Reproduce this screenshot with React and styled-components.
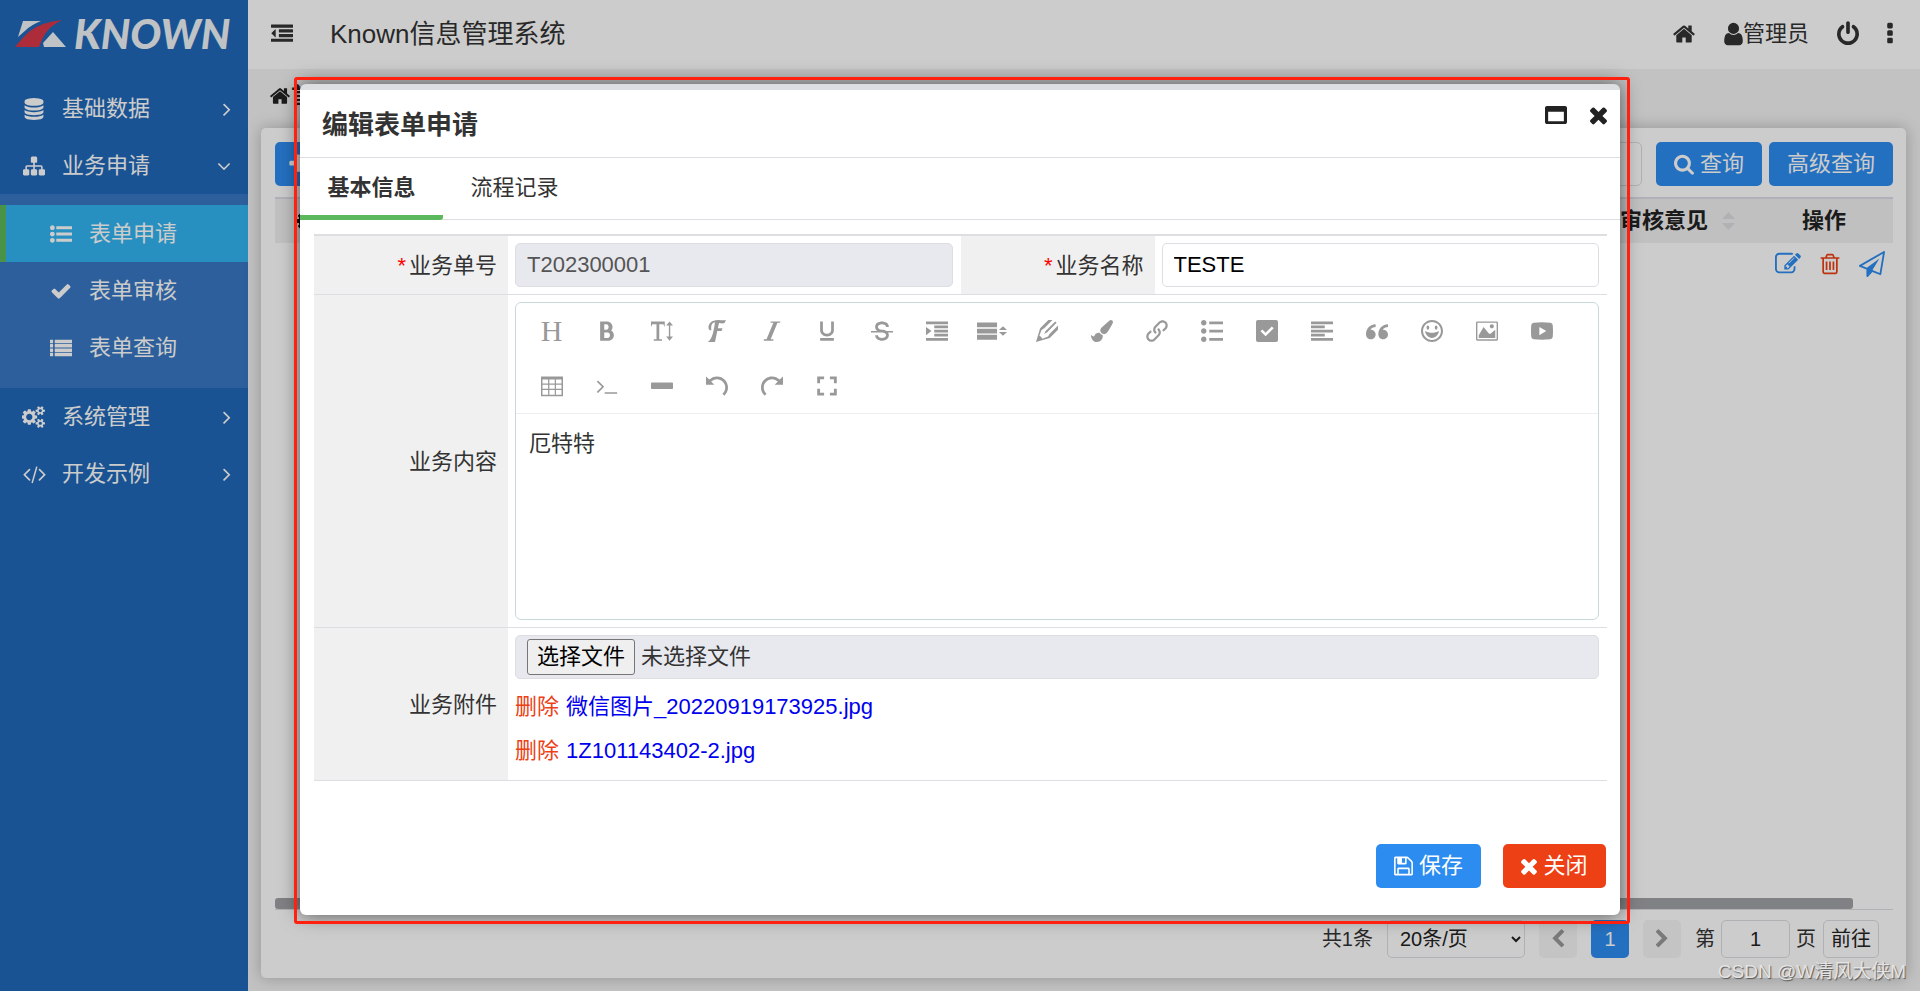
import React from "react";
import styled, { createGlobalStyle, css } from "styled-components";
import {
  ImBold, ImTextHeight, ImFont, ImItalic, ImUnderline, ImStrikethrough, ImIndentIncrease,
  ImPencil2, ImLink, ImList2, ImParagraphLeft, ImQuotesLeft, ImHappy, ImImage,
  ImUndo, ImRedo,
} from "react-icons/im";

const GlobalStyle = createGlobalStyle`
  * { box-sizing: border-box; }
  html, body, #root { height: 100%; }
  body {
    margin: 0;
    color: #333;
    background: #fff;
    font-family: "Liberation Sans", "Noto Sans CJK SC", sans-serif;
    font-size: 22px;
    line-height: 30px;
    overflow: hidden;
  }
  button, input, select, textarea { font: inherit; color: inherit; }
`;

/* ---------- icons ---------- */

const bar = (x, y, w, h = 192) =>
  `M${x + w} ${y + 32}v${h - 64}q0 13-9.5 22.5t-22.5 9.5h${-(w - 64)}q-13 0-22.5-9.5t-9.5-22.5v${-(h - 64)}q0-13 9.5-22.5t22.5-9.5h${w - 64}q13 0 22.5 9.5t9.5 22.5z`;
const dot = (y) => `M384 ${y}q0 80-56 136t-136 56-136-56-56-136 56-136 136-56 136 56 56 136z`;
const disc =
  "q237 0 443-43t325-127v170q0 69-103 128t-280 93.5-385 34.5-385-34.5-280-93.5-103-128v-170q119 84 325 127t443 43z";
const ellipsisDot = (y) =>
  `M1088 ${y}v192q0 40-28 68t-68 28h-192q-40 0-68-28t-28-68v-192q0-40 28-68t68-28h192q40 0 68 28t28 68z`;
const trashSlot = (x) => `M${x} 736v576q0 14-9 23t-23 9h-64q-14 0-23-9t-9-23v-576q0-14 9-23t23-9h64q14 0 23 9t9 23z`;
const smallCog = (y) =>
  `M1856 ${y}v140q0 16-149 31-12 27-30 52 51 113 51 138 0 4-4 7-122 71-124 71-8 0-46-47t-52-68q-20 2-30 2t-30-2q-14 21-52 68t-46 47q-2 0-124-71-4-3-4-7 0-25 51-138-18-25-30-52-149-15-149-31v-140q0-16 149-31 13-29 30-52-51-113-51-138 0-4 4-7 4-2 35-20t59-34 30-16q8 0 46 46.500t52 67.500q20-2 30-2t30 2q51-71 92-112l6-2q4 0 124 70 4 3 4 7 0 25-51 138 17 23 30 52 149 15 149 31z`;
const cogHole = (y) => `M1600 ${y}q0-52-38-90t-90-38-90 38-38 90q0 53 37.5 90.500t90.500 37.500 90.500-37.500 37.500-90.500z`;
const gear =
  "M832 896q0-106-75-181t-181-75-181 75-75 181 75 181 181 75 181-75 75-181z" +
  "M1216 805v185q0 10-7 19.5t-16 10.5l-155 24q-11 35-32 76 34 48 90 115 7 11 7 20 0 12-7 19-23 30-82.5 89.5t-78.5 59.5q-11 0-21-7l-115-90q-37 19-77 31-11 108-23 155-7 24-30 24h-186q-11 0-20-7.5t-10-17.5l-23-153q-34-10-75-31l-118 89q-7 7-20 7-11 0-21-8-144-133-144-160 0-9 7-19 10-14 41-53t47-61q-23-44-35-82l-152-24q-10-1-17-9.5t-7-19.5v-185q0-10 7-19.5t16-10.5l155-24q11-35 32-76-34-48-90-115-7-11-7-20 0-12 7-20 22-30 82-89t79-59q11 0 21 7l115 90q34-18 77-32 11-108 23-154 7-24 30-24h186q11 0 20 7.5t10 17.5l23 153q34 10 75 31l118-89q8-7 20-7 11 0 21 8 144 133 144 160 0 8-7 19-12 16-42 54t-45 60q23 48 34 82l152 23q10 2 17 10.5t7 19.5z";

const paths = {
  home: "M1472 992v480q0 26-19 45t-45 19h-384v-384h-256v384h-384q-26 0-45-19t-19-45v-480q0-1 .5-3t.5-3l575-474 575 474q1 2 1 6zm223-69l-62 74q-8 9-21 11h-3q-13 0-21-7l-692-577-692 577q-12 8-24 7-13-2-21-11l-62-74q-8-10-7-23.5t11-21.5l719-599q32-26 76-26t76 26l244 204v-195q0-14 9-23t23-9h192q14 0 23 9t9 23v408l219 182q10 8 11 21.5t-7 23.5z",
  user: "M1536 1399q0 109-62.5 187t-150.5 78h-854q-88 0-150.5-78t-62.5-187q0-85 8.5-160.5t31.5-152 58.5-131 94-89 134.5-34.5q131 128 313 128t313-128q76 0 134.5 34.5t94 89 58.5 131 31.5 152 8.5 160.5zm-256-887q0 159-112.500 271.500t-271.500 112.500-271.500-112.500-112.500-271.500 112.500-271.500 271.500-112.500 271.500 112.500 112.500 271.500z",
  power: "M1664 896q0 156-61 298t-164 245-245 164-298 61-298-61-245-164-164-245-61-298q0-182 80.5-343t226.5-270q43-32 95.5-25t83.5 50q32 42 24.5 94.5t-49.5 84.5q-98 74-151.5 181t-53.5 228q0 104 40.5 198.5t109.5 163.5 163.5 109.5 198.5 40.5 198.5-40.5 163.5-109.5 109.5-163.5 40.5-198.5q0-121-53.5-228t-151.5-181q-42-32-49.5-84.5t24.5-94.5q31-43 84-50t95 25q146 109 226.5 270t80.5 343zm-640-768v640q0 52-38 90t-90 38-90-38-38-90v-640q0-52 38-90t90-38 90 38 38 90z",
  more: ellipsisDot(1248) + ellipsisDot(736) + ellipsisDot(224),
  outdent:
    "M384 544v576q0 13-9.500 22.500t-22.500 9.500q-14 0-23-9l-288-288q-9-9-9-23t9-23l288-288q9-9 23-9 13 0 22.500 9.500t9.500 22.500z" +
    bar(0, 1280, 1792, 256) + bar(640, 896, 1152, 256) + bar(640, 512, 1152, 256) + bar(0, 128, 1792, 256),
  database:
    "M896 768" + disc + "M896 1536" + disc + "M896 1152" + disc +
    "M896 0q208 0 385 34.5t280 93.5 103 128v128q0 69-103 128t-280 93.5-385 34.5-385-34.5-280-93.5-103-128v-128q0-69 103-128t280-93.5 385-34.5z",
  sitemap: "M1792 1248v320q0 40-28 68t-68 28h-320q-40 0-68-28t-28-68v-320q0-40 28-68t68-28h96v-192h-512v192h96q40 0 68 28t28 68v320q0 40-28 68t-68 28h-320q-40 0-68-28t-28-68v-320q0-40 28-68t68-28h96v-192h-512v192h96q40 0 68 28t28 68v320q0 40-28 68t-68 28h-320q-40 0-68-28t-28-68v-320q0-40 28-68t68-28h96v-192q0-52 38-90t90-38h512v-192h-96q-40 0-68-28t-28-68v-320q0-40 28-68t68-28h320q40 0 68 28t28 68v320q0 40-28 68t-68 28h-96v192h512q52 0 90 38t38 90v192h96q40 0 68 28t28 68z",
  listUl: dot(1408) + dot(896) + dot(384) + bar(512, 1280, 1280, 256) + bar(512, 768, 1280, 256) + bar(512, 256, 1280, 256),
  list: [1280, 928, 576, 224].map((y) => bar(0, y, 256, 288) + bar(384, y, 1408, 288)).join(""),
  check: "M1671 566q0 40-28 68l-724 724-136 136q-28 28-68 28t-68-28l-136-136-362-362q-28-28-28-68t28-68l136-136q28-28 68-28t68 28l294 295 656-657q28-28 68-28t68 28l136 136q28 28 28 68z",
  cog: gear,
  cogs: gear + cogHole(1408) + cogHole(384) + smallCog(1338) + smallCog(314),
  code: "M681 1399l-50 50q-10 10-23 10t-23-10l-466-466q-10-10-10-23t10-23l466-466q10-10 23-10t23 10l50 50q10 10 10 23t-10 23l-393 393 393 393q10 10 10 23t-10 23zm591-1067l-373 1291q-4 13-15.500 19.500t-23.500 2.500l-62-17q-13-4-19.500-15.500t-2.500-24.500l373-1291q4-13 15.500-19.500t23.500-2.500l62 17q13 4 19.500 15.500t2.500 24.500zm657 651l-466 466q-10 10-23 10t-23-10l-50-50q-10-10-10-23t10-23l393-393-393-393q-10-10-10-23t10-23l50-50q10-10 23-10t23 10l466 466q10 10 10 23t-10 23z",
  right: "M1171 960q0 13-10 23l-466 466q-10 10-23 10t-23-10l-50-50q-10-10-10-23t10-23l393-393-393-393q-10-10-10-23t10-23l50-50q10-10 23-10t23 10l466 466q10 10 10 23z",
  down: "M1395 736q0 13-10 23l-466 466q-10 10-23 10t-23-10l-466-466q-10-10-10-23t10-23l50-50q10-10 23-10t23 10l393 393 393-393q10-10 23-10t23 10l50 50q10 10 10 23z",
  search: "M1216 832q0-185-131.5-316.5t-316.5-131.5-316.5 131.5-131.5 316.5 131.5 316.5 316.5 131.5 316.5-131.5 131.5-316.5zm512 832q0 52-38 90t-90 38q-54 0-90-38l-343-342q-179 124-399 124-143 0-273.5-55.5t-225-150-150-225-55.5-273.5 55.5-273.5 150-225 225-150 273.5-55.5 273.5 55.5 225 150 150 225 55.5 273.5q0 220-124 399l343 343q37 37 37 90z",
  plus: "M1600 736v192q0 40-28 68t-68 28h-416v416q0 40-28 68t-68 28h-192q-40 0-68-28t-28-68v-416h-416q-40 0-68-28t-28-68v-192q0-40 28-68t68-28h416v-416q0-40 28-68t68-28h192q40 0 68 28t28 68v416h416q40 0 68 28t28 68z",
  close: "M1490 1322q0 40-28 68l-136 136q-28 28-68 28t-68-28l-294-294-294 294q-28 28-68 28t-68-28l-136-136q-28-28-28-68t28-68l294-294-294-294q-28-28-28-68t28-68l136-136q28-28 68-28t68 28l294 294 294-294q28-28 68-28t68 28l136 136q28 28 28 68t-28 68l-294 294 294 294q28 28 28 68z",
  maximize: "M256 1408h1280v-768h-1280zM1792 320v1152q0 66-47 113t-113 47h-1472q-66 0-113-47t-47-113v-1152q0-66 47-113t113-47h1472q66 0 113 47t47 113z",
  trash:
    trashSlot(704) + trashSlot(960) + trashSlot(1216) +
    "M1344 1460v-948h-896v948q0 22 7 40.5t14.5 27 10.5 8.5h832q3 0 10.5-8.5t14.5-27 7-40.5zm-672-1076h448l-48-117q-7-9-17-11h-317q-10 2-17 11zm928 32v64q0 14-9 23t-23 9h-96v948q0 83-47 143.5t-113 60.5h-832q-66 0-113-58.5t-47-141.5v-952h-96q-14 0-23-9t-9-23v-64q0-14 9-23t23-9h309l70-167q15-37 54-63t79-26h320q40 0 79 26t54 63l70 167h309q14 0 23 9t9 23z",
  edit: "M888 1184l116-116-152-152-116 116v56h96v96h56zm440-720q-16-16-33 1l-350 350q-17 17-1 33t33-1l350-350q17-17 1-33zm80 594v190q0 119-84.5 203.5t-203.5 84.5h-832q-119 0-203.5-84.5t-84.5-203.5v-832q0-119 84.5-203.5t203.5-84.5h832q63 0 117 25 15 7 18 23 3 17-9 29l-49 49q-14 14-32 8-23-6-45-6h-832q-66 0-113 47t-47 113v832q0 66 47 113t113 47h832q66 0 113-47t47-113v-126q0-13 9-22l64-64q15-15 35-7t20 29zm-96-738l288 288-672 672h-288v-288zm444 132l-92 92-288-288 92-92q28-28 68-28t68 28l152 152q28 28 28 68t-28 68z",
  plane: "M1764 11q33 24 27 64l-256 1536q-5 29-32 45-14 8-31 8-11 0-24-5l-527-215-298 327q-18 21-47 21-14 0-23-4-19-7-30-23.5t-11-36.5v-452l-472-193q-37-14-40-55-3-39 32-59l1664-960q35-21 68 2zm-342 1499l221-1323-1434 827 336 137 863-639-478 797z",
  save: "M512 1536h768v-384h-768v384zm896 0h128v-896q0-14-10-38.5t-20-34.5l-281-281q-10-10-34-20t-39-10v416q0 40-28 68t-68 28h-576q-40 0-68-28t-28-68v-416h-128v1280h128v-416q0-40 28-68t68-28h832q40 0 68 28t28 68v416zm-384-928v-320q0-13-9.5-22.5t-22.5-9.5h-192q-13 0-22.5 9.5t-9.5 22.5v320q0 13 9.5 22.5t22.5 9.5h192q13 0 22.5-9.5t9.5-22.5zm640 32v928q0 40-28 68t-68 28h-1344q-40 0-68-28t-28-68v-1344q0-40 28-68t68-28h928q40 0 88 20t76 48l280 280q28 28 48 76t20 88z",
  prev: "M1427 301l-531 531 531 531q19 19 19 45t-19 45l-166 166q-19 19-45 19t-45-19l-742-742q-19-19-19-45t19-45l742-742q19-19 45-19t45 19l166 166q19 19 19 45t-19 45z",
  next: "M1363 877l-742 742q-19 19-45 19t-45-19l-166-166q-19-19-19-45t19-45l531-531-531-531q-19-19-19-45t19-45l166-166q19-19 45-19t45 19l742 742q19 19 19 45t-19 45z",
  brush: "M1615 0q70 0 122.5 46.5t52.5 116.5q0 63-45 151-332 629-465 752-97 91-218 91-126 0-216.5-92.5t-90.5-219.5q0-128 92-212l638-579q59-54 130-54zm-909 1034q39 76 106.5 130t150.5 76l1 71q4 213-129.5 347t-348.500 134q-123 0-218-46.500t-152.500-127.500-86.500-183-29-220q7 5 41 30t62 44.500 59 36.500 46 17q41 0 55-37 25-66 57.500-112.500t69.500-76 88-47.500 103-25.500 125-10.500z",
  terminal: "M649 983l-466 466q-10 10-23 10t-23-10l-50-50q-10-10-10-23t10-23l393-393-393-393q-10-10-10-23t10-23l50-50q10-10 23-10t23 10l466 466q10 10 10 23t-10 23zm1079 457v64q0 14-9 23t-23 9h-960q-14 0-23-9t-9-23v-64q0-14 9-23t23-9h960q14 0 23 9t9 23z",
  lineHeight: "M0 200h1630v390h-1630zM0 705h1630v390h-1630zM0 1210h1630v390h-1630zM1790 815l325-300 325 300zM1790 975l325 300 325-300z",
  todo: "M160 0h1472q160 0 160 160v1472q0 160-160 160h-1472q-160 0-160-160v-1472q0-160 160-160zM780 1330l660-660-150-150-510 510-260-260-150 150z",
  table: "M0 128h1792v1600h-1792zM120 370v330h460v-330zM680 370v330h440v-330zM1220 370v330h450v-330zM120 800v330h460v-330zM680 800v330h440v-330zM1220 800v330h450v-330zM120 1230v380h460v-380zM680 1230v380h440v-380zM1220 1230v380h450v-380z",
  video: "M220 230Q896 150 1572 230Q1752 250 1772 430Q1810 896 1772 1362Q1752 1542 1572 1562Q896 1642 220 1562Q40 1542 20 1362Q-18 896 20 430Q40 250 220 230zM680 560v672l560-336z",
  minus: "M64 610h1664q64 0 64 64v400q0 64-64 64h-1664q-64 0-64-64v-400q0-64 64-64z",
  full: "M100 120h560v230h-330v330h-230zM1132 120h560v560h-230v-330h-330zM100 1112h230v330h330v230h-560zM1462 1112h230v560h-560v-230h330z",
};

/* horizontal start and width of the glyphs that are not square */
const spans = {
  user: [256, 1280],
  power: [128, 1536],
  more: [704, 384],
  cogs: [0, 1920],
  code: [0, 2048],
  cog: [-160, 1536],
  right: [512, 704],
  down: [320, 1152],
  search: [64, 1664],
  save: [128, 1536],
  close: [302, 1188],
  lineHeight: [0, 2440],
};

const Glyph = styled.svg`
  display: block;
  flex: none;
  fill: currentColor;
  fill-rule: ${(p) => (p.$evenOdd ? "evenodd" : "nonzero")};
`;

function Icon({ name, size = 22 }) {
  const [start, span] = spans[name] || [0, 1792];
  return (
    <Glyph
      width={Math.round((size * span) / 1792)}
      height={size}
      viewBox={`${start} 0 ${span} 1792`}
      $evenOdd={["todo", "maximize", "table", "video"].includes(name)}
      aria-hidden="true"
    >
      <path d={paths[name]} />
    </Glyph>
  );
}

/* ---------- page frame ---------- */

const Page = styled.div`
  position: relative;
  display: flex;
  height: 100%;
`;

const Sidebar = styled.aside`
  width: 248px;
  flex: none;
  background: #2068b8;
  color: #fff;
`;

const Brand = styled.div`
  display: flex;
  align-items: center;
  height: 69px;
  padding: 0 0 2px 14px;
  margin-bottom: 11px;
  gap: 7px;
`;

const BrandName = styled.span`
  font-family: Lato, "Liberation Sans", sans-serif;
  font-size: 41px;
  font-weight: 900;
  font-style: italic;
  line-height: 42px;
  color: #f0f4f8;
`;

const menuRow = css`
  display: flex;
  align-items: center;
  height: 57px;
  color: inherit;
  text-decoration: none;
`;

const MenuLink = styled.a`
  ${menuRow}
  padding: 0 17px 0 22px;
`;

const MenuIcon = styled.span`
  display: flex;
  justify-content: center;
  width: 24px;
`;

const MenuText = styled.span`
  flex: 1;
  padding-left: 16px;
`;

const SubMenu = styled.div`
  padding: 11px 0 12px;
  background: #3777c2;
`;

const SubLink = styled.a`
  ${menuRow}
  padding-left: 43px;
  border-left: 6px solid ${(p) => (p.$active ? "#5cb85c" : "transparent")};
  background: ${(p) => (p.$active ? "#32b4f0" : "none")};
`;

const Main = styled.main`
  flex: 1;
  min-width: 0;
  display: flex;
  flex-direction: column;
  background: #f3f3f3;
`;

const TopBar = styled.header`
  display: flex;
  align-items: center;
  height: 69px;
  padding: 0 27px 1px 23px;
  background: #fff;
`;

const AppTitle = styled.h1`
  flex: 1;
  margin: 0 0 0 37px;
  font-size: 26px;
  font-weight: 400;
`;

const TopActions = styled.div`
  display: flex;
  align-items: center;
  gap: 28px;
`;

const PlainButton = styled.button`
  display: flex;
  align-items: center;
  padding: 0;
  border: 0;
  background: none;
  color: ${(p) => p.$color || "inherit"};
`;

const Crumbs = styled.nav`
  display: flex;
  align-items: center;
  height: 59px;
  padding: 0 21px 5px;
  color: #222;
  font-weight: 700;
`;

const Panel = styled.section`
  flex: 1;
  display: flex;
  flex-direction: column;
  margin: 0 14px 13px 13px;
  padding: 14px 13px 0 14px;
  border-radius: 5px;
  background: #fff;
  box-shadow: 0 0 16px rgba(0, 0, 0, 0.25);
`;

const Query = styled.div`
  display: flex;
  align-items: center;
  height: 44px;
  gap: 7px;
  margin-bottom: 11px;
`;

const Spacer = styled.div`
  flex: 1;
`;

const Button = styled.button`
  display: flex;
  align-items: center;
  justify-content: center;
  gap: 6px;
  height: 44px;
  padding: 0 18px;
  border: 0;
  border-radius: 5px;
  background: ${(p) => (p.$danger ? "#ed4014" : "#2d8cf0")};
  color: #fff;
`;

const AddButton = styled(Button)`
  padding: 0 12px;
`;

const QueryInput = styled.input`
  width: 240px;
  height: 44px;
  margin-right: 7px;
  border: 1px solid #dcdee2;
  border-radius: 5px;
  background: #fff;
`;

const Grid = styled.table`
  width: 100%;
  border-collapse: collapse;
  border-top: 2px solid #dcdee6;
  color: #222;

  th {
    height: 45px;
    padding: 0;
    background: #f0f0f0;
  }
  td {
    height: 42px;
    padding: 0;
    text-align: center;
  }
`;

const HeadCell = styled.div`
  display: flex;
  align-items: center;
  justify-content: ${(p) => (p.$end ? "flex-end" : "center")};
  gap: 14px;
  padding-right: ${(p) => (p.$end ? "20px" : "0")};
`;

const SortMark = styled.svg`
  display: block;
  fill: #dcdee2;
`;

const RowActions = styled.div`
  display: flex;
  align-items: center;
  justify-content: flex-end;
  gap: 17px;
  padding-right: 8px;
`;

const GridSpace = styled.div`
  flex: 1;
`;

const ScrollTrack = styled.div`
  height: 12px;
  padding-right: 40px;
  border-bottom: 1px solid #dcdee2;

  div {
    height: 11px;
    border-radius: 3px;
    background: #a0a2a5;
  }
`;

const Pager = styled.div`
  display: flex;
  align-items: center;
  justify-content: flex-end;
  height: 68px;
  padding: 0 14px 10px 0;
  font-size: 20px;

  select {
    width: 138px;
    height: 38px;
    margin: 0 14px;
    padding: 0 8px;
    border: 1px solid #dcdee2;
    border-radius: 5px;
    background: #fff;
    color: #222;
  }
  input {
    width: 69px;
    height: 38px;
    margin: 0 6px;
    border: 1px solid #dcdee2;
    border-radius: 5px;
    background: #fff;
    text-align: center;
    color: #222;
  }
`;

const PageButton = styled.button`
  display: flex;
  align-items: center;
  justify-content: center;
  width: 38px;
  height: 38px;
  margin-right: 14px;
  padding: 0;
  border: 0;
  border-radius: 5px;
  background: ${(p) => (p.$current ? "#2d8cf0" : "#f5f5f5")};
  color: ${(p) => (p.$current ? "#fff" : "#999")};
`;

const GoButton = styled.button`
  width: 56px;
  height: 38px;
  margin-left: 7px;
  padding: 0;
  border: 1px solid #dcdee2;
  border-radius: 5px;
  background: #fff;
  color: #222;
`;

/* ---------- dialog ---------- */

const Mask = styled.div`
  position: absolute;
  inset: 0;
  display: flex;
  align-items: center;
  justify-content: center;
  padding-top: 8px;
  background: rgba(0, 0, 0, 0.2);
`;

const Dialog = styled.section`
  position: relative;
  width: 1320px;
  max-width: 90%;
  border-top: 6px solid #dcdee2;
  border-radius: 6px;
  background: #fff;
  box-shadow: 0 0 20px rgba(0, 0, 0, 0.6);
`;

const Highlight = styled.div`
  position: absolute;
  inset: -13px -10px -9px -6px;
  border: 3px solid #ff2010;
  border-radius: 3px;
  pointer-events: none;
`;

const DialogHead = styled.header`
  display: flex;
  justify-content: space-between;
  height: 68px;
  padding: 0 13px 0 22px;
  border-bottom: 1px solid #dcdee2;

  h2 {
    margin: 0;
    font-size: 26px;
    line-height: 70px;
  }
`;

const DialogTools = styled.div`
  display: flex;
  align-items: center;
  gap: 23px;
  height: 50px;
  color: #222;
`;

const Tabs = styled.div`
  display: flex;
  height: 62px;
  border-bottom: 1px solid #dcdee2;
`;

const Tab = styled.button`
  width: 143px;
  margin-bottom: -1px;
  padding: 2px 0 0;
  border: 0;
  border-bottom: 5px solid ${(p) => (p.$active ? "#5cb85c" : "transparent")};
  border-radius: 0 0 3px 0;
  background: none;
  font-weight: ${(p) => (p.$active ? 700 : 400)};
`;

const FormTable = styled.table`
  width: calc(100% - 27px);
  margin: 14px 13px 0 14px;
  border-spacing: 0;
  table-layout: fixed;
  border-top: 2px solid #dcdee2;

  th {
    width: 194px;
    padding: 1px 11px 0;
    border-bottom: 1px solid #dcdee2;
    background: #f0f0f0;
    font-weight: 400;
    text-align: right;
  }
  td {
    padding: 7px 8px 7px 7px;
    border-bottom: 1px solid #dcdee2;
  }
`;

const Required = styled.span`
  margin-right: 3px;
  color: #f00;
`;

const TextBox = styled.input`
  display: block;
  width: 100%;
  height: 44px;
  padding: 0 11px;
  border: 1px solid #dcdee2;
  border-radius: 5px;
  background: ${(p) => (p.readOnly ? "#e8e9ee" : "#fff")};
  color: ${(p) => (p.readOnly ? "#555" : "#000")};
`;

const Editor = styled.div`
  border: 1px solid #c9d8db;
  border-radius: 6px;
`;

const EditorBar = styled.div`
  display: flex;
  flex-wrap: wrap;
  padding: 0 8px;
  border-bottom: 1px solid #eee;
`;

const Tool = styled.button`
  display: flex;
  align-items: center;
  justify-content: center;
  width: 55px;
  height: 55px;
  padding: 0;
  border: 0;
  background: none;
  color: #999;
`;

const HeadingMark = styled.span`
  font-family: "Liberation Serif", serif;
  font-size: 30px;
`;

const EditorText = styled.textarea`
  display: block;
  width: 100%;
  height: 205px;
  padding: 14px 13px;
  border: 0;
  outline: 0;
  background: none;
  line-height: 32px;
  resize: none;
`;

const FileBox = styled.div`
  position: relative;
  display: flex;
  align-items: center;
  gap: 6px;
  height: 44px;
  margin-bottom: 6px;
  padding: 0 11px;
  border: 1px solid #dcdee2;
  border-radius: 5px;
  background: #e8e9ee;
  line-height: 34px;

  input {
    position: absolute;
    width: 1px;
    height: 1px;
    opacity: 0;
  }
  label {
    padding: 0 9px;
    border: 1px solid #767676;
    border-radius: 3px;
    background: #efefef;
    color: #000;
  }
`;

const FileRow = styled.div`
  display: flex;
  gap: 7px;
  height: 44px;
  line-height: 44px;

  a {
    color: #0000ee;
    text-decoration: none;
  }
`;

const DialogFoot = styled.footer`
  display: flex;
  justify-content: flex-end;
  gap: 22px;
  padding: 63px 14px 27px;
`;

const DialogButton = styled(Button)`
  min-width: 103px;
`;

const Watermark = styled.div`
  position: absolute;
  right: 14px;
  bottom: 5px;
  color: #e4e4e4;
  font-size: 19px;
  line-height: 28px;
  text-shadow: 1px 1px 1px #555;
`;

const menuBefore = [{ icon: "database", text: "基础数据", arrow: "right" }, { icon: "sitemap", text: "业务申请", arrow: "down" }];
const subMenu = [{ icon: "listUl", text: "表单申请", active: true }, { icon: "check", text: "表单审核" }, { icon: "list", text: "表单查询" }];
const menuAfter = [{ icon: "cogs", text: "系统管理", arrow: "right" }, { icon: "code", text: "开发示例", arrow: "right" }];

const HeadingTool = () => <HeadingMark>H</HeadingMark>;

const tools = [
  ["标题", HeadingTool], ["加粗", ImBold], ["字号", ImTextHeight], ["字体", ImFont], ["斜体", ImItalic],
  ["下划线", ImUnderline], ["删除线", ImStrikethrough], ["缩进", ImIndentIncrease], ["行高", "lineHeight"],
  ["文字颜色", ImPencil2], ["背景颜色", "brush"], ["链接", ImLink], ["列表", ImList2], ["待办", "todo"],
  ["对齐", ImParagraphLeft], ["引用", ImQuotesLeft], ["表情", ImHappy], ["图片", ImImage], ["视频", "video"],
  ["表格", "table"], ["代码", "terminal"], ["分割线", "minus"], ["撤销", ImUndo], ["恢复", ImRedo], ["全屏", "full"],
];

function MenuItem({ item }) {
  return (
    <MenuLink href="#">
      <MenuIcon><Icon name={item.icon} /></MenuIcon>
      <MenuText>{item.text}</MenuText>
      <Icon name={item.arrow} />
    </MenuLink>
  );
}

function Logo() {
  return (
    <svg width="53" height="28" viewBox="0 0 53 28" aria-hidden="true">
      <path d="M9 1h18Q17 5 12 10L4 17z" fill="#f0f4f8" />
      <path d="M1 27Q9 17 16 11 28 2 48 0 36 6 31 14 28 19 25 27z" fill="#d83848" />
      <path d="M39 12l13 15H30l-1-4z" fill="#f0f4f8" />
    </svg>
  );
}

export default function App() {
  return (
    <>
      <GlobalStyle />
      <Page>
        <Sidebar>
          <Brand><Logo /><BrandName>KNOWN</BrandName></Brand>
          <nav>
            {menuBefore.map((item) => <MenuItem key={item.text} item={item} />)}
            <SubMenu>
              {subMenu.map((item) => (
                <SubLink key={item.text} href="#" $active={item.active}>
                  <MenuIcon><Icon name={item.icon} /></MenuIcon>
                  <MenuText>{item.text}</MenuText>
                </SubLink>
              ))}
            </SubMenu>
            {menuAfter.map((item) => <MenuItem key={item.text} item={item} />)}
          </nav>
        </Sidebar>

        <Main>
          <TopBar>
            <PlainButton aria-label="折叠菜单"><Icon name="outdent" /></PlainButton>
            <AppTitle>Known信息管理系统</AppTitle>
            <TopActions>
              <PlainButton aria-label="首页"><Icon name="home" size={24} /></PlainButton>
              <PlainButton><Icon name="user" size={26} />管理员</PlainButton>
              <PlainButton aria-label="退出"><Icon name="power" size={26} /></PlainButton>
              <PlainButton aria-label="更多"><Icon name="more" size={26} /></PlainButton>
            </TopActions>
          </TopBar>
          <Crumbs><Icon name="home" />首页</Crumbs>
          <Panel>
            <Query>
              <AddButton><Icon name="plus" />新增</AddButton>
              <Spacer />
              <QueryInput aria-label="业务名称" />
              <Button><Icon name="search" />查询</Button>
              <Button>高级查询</Button>
            </Query>
            <Grid>
              <colgroup><col width="61" /><col /><col width="138" /></colgroup>
              <thead>
                <tr>
                  <th>
                    <HeadCell>
                      <PlainButton aria-label="列设置" $color="#000"><Icon name="cog" size={26} /></PlainButton>
                    </HeadCell>
                  </th>
                  <th>
                    <HeadCell $end>
                      审核意见
                      <SortMark width="13" height="18" viewBox="0 0 13 18"><path d="M6.500 0L13 7H0zM6.500 18L0 11h13z" /></SortMark>
                    </HeadCell>
                  </th>
                  <th>操作</th>
                </tr>
              </thead>
              <tbody>
                <tr>
                  <td>1</td>
                  <td />
                  <td>
                    <RowActions>
                      <PlainButton aria-label="编辑" $color="#2d8cf0"><Icon name="edit" size={26} /></PlainButton>
                      <PlainButton aria-label="删除" $color="#ed4014"><Icon name="trash" size={24} /></PlainButton>
                      <PlainButton aria-label="提交" $color="#2d8cf0"><Icon name="plane" size={26} /></PlainButton>
                    </RowActions>
                  </td>
                </tr>
              </tbody>
            </Grid>
            <GridSpace />
            <ScrollTrack><div /></ScrollTrack>
            <Pager>
              共1条
              <select aria-label="每页条数"><option>20条/页</option></select>
              <PageButton aria-label="上一页"><Icon name="prev" size={20} /></PageButton>
              <PageButton $current>1</PageButton>
              <PageButton aria-label="下一页"><Icon name="next" size={20} /></PageButton>
              <label htmlFor="page">第</label>
              <input id="page" defaultValue="1" />
              页
              <GoButton>前往</GoButton>
            </Pager>
          </Panel>
        </Main>

        <Mask>
          <Dialog role="dialog" aria-labelledby="dialog-title">
            <DialogHead>
              <h2 id="dialog-title">编辑表单申请</h2>
              <DialogTools>
                <PlainButton aria-label="最大化"><Icon name="maximize" /></PlainButton>
                <PlainButton aria-label="关闭"><Icon name="close" size={26} /></PlainButton>
              </DialogTools>
            </DialogHead>
            <Tabs role="tablist">
              <Tab role="tab" aria-selected="true" $active>基本信息</Tab>
              <Tab role="tab" aria-selected="false">流程记录</Tab>
            </Tabs>
            <FormTable>
              <tbody>
                <tr>
                  <th scope="row"><Required>*</Required><label htmlFor="no">业务单号</label></th>
                  <td><TextBox id="no" defaultValue="T202300001" readOnly /></td>
                  <th scope="row"><Required>*</Required><label htmlFor="name">业务名称</label></th>
                  <td><TextBox id="name" defaultValue="TESTE" /></td>
                </tr>
                <tr>
                  <th scope="row"><label htmlFor="content">业务内容</label></th>
                  <td colSpan={3}>
                    <Editor>
                      <EditorBar role="toolbar">
                        {tools.map(([label, Mark]) => (
                          <Tool key={label} aria-label={label}>
                            {typeof Mark === "string" ? <Icon name={Mark} /> : <Mark size={22} />}
                          </Tool>
                        ))}
                      </EditorBar>
                      <EditorText id="content" defaultValue="厄特特" />
                    </Editor>
                  </td>
                </tr>
                <tr>
                  <th scope="row">业务附件</th>
                  <td colSpan={3}>
                    <FileBox>
                      <input id="file" type="file" />
                      <label htmlFor="file">选择文件</label>
                      未选择文件
                    </FileBox>
                    <FileRow>
                      <PlainButton $color="#ed4014">删除</PlainButton>
                      <a href="#">微信图片_20220919173925.jpg</a>
                    </FileRow>
                    <FileRow>
                      <PlainButton $color="#ed4014">删除</PlainButton>
                      <a href="#">1Z101143402-2.jpg</a>
                    </FileRow>
                  </td>
                </tr>
              </tbody>
            </FormTable>
            <DialogFoot>
              <DialogButton><Icon name="save" />保存</DialogButton>
              <DialogButton $danger><Icon name="close" size={24} />关闭</DialogButton>
            </DialogFoot>
            <Highlight />
          </Dialog>
        </Mask>
        <Watermark>CSDN @W清风大侠M</Watermark>
      </Page>
    </>
  );
}
